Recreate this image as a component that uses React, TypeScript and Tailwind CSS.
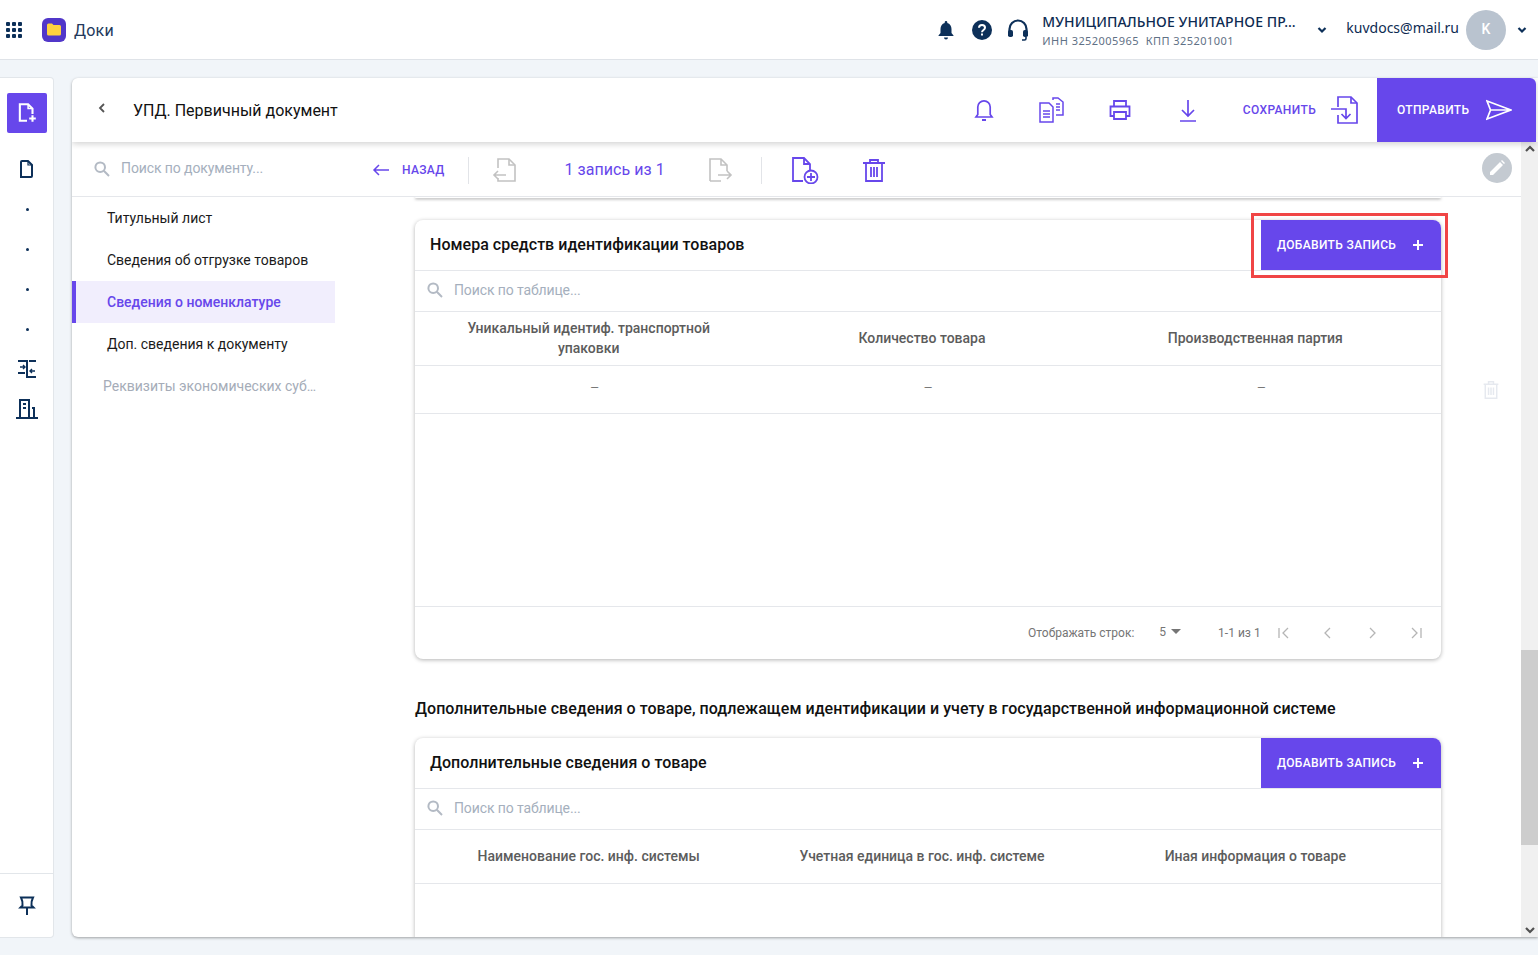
import React from "react";

const P = "#6747eb";
const N = "#0d3059";

function Svg({ s = 24, c = P, w = 1.6, children, vb = "0 0 24 24" }: { s?: number; c?: string; w?: number; children: React.ReactNode; vb?: string }) {
  return (
    <svg width={s} height={s} viewBox={vb} fill="none" stroke={c} strokeWidth={w} strokeLinecap="butt" strokeLinejoin="miter" className="shrink-0">
      {children}
    </svg>
  );
}

function SearchIcon({ s = 16 }: { s?: number }) {
  return (
    <Svg s={s} c="#b3bac4" w={2} vb="0 0 16 16">
      <circle cx="6.2" cy="6.2" r="4.8" />
      <path d="M9.8 9.8 15 15" />
    </Svg>
  );
}

function Chevron({ c = N }: { c?: string }) {
  return (
    <Svg s={10} c={c} w={2.2} vb="0 0 10 10">
      <path d="M1.5 3 5 6.5 8.5 3" />
    </Svg>
  );
}

function Dot() {
  return <div className="w-[3px] h-[3px] rounded-full bg-[#0d3059]" />;
}

function TopBar() {
  return (
    <header className="h-[60px] shrink-0 bg-white border-b border-[#dfe3e8] flex items-center pl-[6px] pr-[11px] font-['Roboto',sans-serif]">
      <div className="grid grid-cols-3 gap-[2px] w-[16px]">
        {Array.from({ length: 9 }).map((_, i) => (
          <div key={i} className="w-[4px] h-[4px] rounded-[1px] bg-[#0d3059]" />
        ))}
      </div>
      <div className="ml-[20px] w-[24px] h-[24px] rounded-[6px] bg-[#5137c9] flex items-center justify-center">
        <svg width="14" height="13" viewBox="0 0 14 13">
          <path d="M0 2a1.5 1.5 0 0 1 1.5-1.5H5L6.5 2h6A1.5 1.5 0 0 1 14 3.500V11a1.500 1.500 0 0 1-1.500 1.500h-11A1.500 1.500 0 0 1 0 11z" fill="#ffd23f" />
        </svg>
      </div>
      <span className="ml-[8px] pt-[2px] text-[16px] tracking-[0.2px] text-[#23395b]">Доки</span>
      <div className="flex-1" />
      <svg width="16" height="20" viewBox="0 0 16 20" fill={N} className="mr-[18px]">
        <path d="M8 1a1.300 1.300 0 0 1 1.300 1.300v.7C12 3.700 13.500 6 13.500 9v4l2 2.500v.5H.5v-.5l2-2.500V9c0-3 1.500-5.300 4.200-6v-.7A1.300 1.300 0 0 1 8 1z" />
        <path d="M6 17.500h4a2 2 0 0 1-4 0z" />
      </svg>
      <svg width="20" height="20" viewBox="0 0 20 20" className="mr-[15px]">
        <circle cx="10" cy="10" r="10" fill={N} />
        <path d="M7 7.800C7 6 8.300 5 10 5s3 1 3 2.700c0 2.300-3 2.300-3 4.600" stroke="#fff" strokeWidth="2" fill="none" />
        <rect x="9" y="13.500" width="2" height="2" fill="#fff" />
      </svg>
      <svg width="22" height="22" viewBox="0 0 22 22" fill="none" className="mr-[13px]">
        <path d="M2.500 13V10a8.500 8.500 0 0 1 17 0v3" stroke={N} strokeWidth="2.200" />
        <rect x="1" y="11" width="5" height="7" rx="1.800" fill={N} />
        <rect x="16" y="11" width="5" height="7" rx="1.800" fill={N} />
        <path d="M19 18v1.500a1.500 1.500 0 0 1-1.500 1.500H15" stroke={N} strokeWidth="1.600" />
      </svg>
      <div className="w-[275px] pt-[2px] flex flex-col">
        <span className="text-[14px] leading-[18px] tracking-[0.1px] text-[#0d2b52] font-['Noto_Sans',sans-serif] font-medium whitespace-nowrap">МУНИЦИПАЛЬНОЕ УНИТАРНОЕ ПР…</span>
        <span className="mt-[3px] text-[11px] leading-[14px] tracking-[0.45px] text-[#5f7186] font-['Noto_Sans',sans-serif] whitespace-nowrap">ИНН 3252005965&nbsp;&nbsp;КПП 325201001</span>
      </div>
      <Chevron />
      <span className="ml-[19px] mb-[4px] text-[14px] text-[#0d2b52] font-['Noto_Sans',sans-serif]">kuvdocs@mail.ru</span>
      <div className="ml-[7px] w-[40px] h-[40px] rounded-full bg-[#b9c3cf] flex items-center justify-center text-white text-[14px] font-medium">K</div>
      <div className="ml-[11px]"><Chevron /></div>
    </header>
  );
}

function Rail() {
  return (
    <aside className="w-[54px] h-[861px] shrink-0 bg-white border border-l-0 border-[#e2e6ea] rounded-r-[4px] flex flex-col items-center pt-[15px]">
      <div className="w-[40px] h-[40px] rounded-[2px] flex items-center justify-center bg-[#6747eb] mr-[-1px]">
        <Svg s={22} c="#fff" w={1.900} vb="0 0 20 20">
          <path d="M10 17H3.500V2H11l4 4v5" />
          <path d="M11 2v4h4" strokeWidth="1.400" />
          <path d="M15 12v6M12 15h6" />
        </Svg>
      </div>
      <div className="mt-[26px] ml-[1px]">
        <Svg s={20} c={N} w={2} vb="0 0 20 20">
          <path d="M5 3a1 1 0 0 1 1-1h6l4 4v11a1 1 0 0 1-1 1H5z" transform="translate(-1 0)" />
          <path d="M11 2v4h4" strokeWidth="1.200" />
        </Svg>
      </div>
      <div className="mt-[29px] ml-[1px] flex flex-col gap-[37px]">
        <Dot /><Dot /><Dot /><Dot />
      </div>
      <div className="mt-[28px]">
        <Svg s={20} c={N} w={2} vb="0 0 20 20">
          <path d="M1 2h9v16h9M12 2h7M1 14h7" />
          <path d="M3 8h5M6 6l2 2-2 2M18 12h-5M15 10l-2 2 2 2" strokeWidth="1.400" />
        </Svg>
      </div>
      <div className="mt-[19px]">
        <Svg s={22} c={N} w={2} vb="0 0 22 22">
          <path d="M0 20h22M4 20V2h9v18" />
          <path d="M7 6h3M7 10h3M16 10h2v10" />
        </Svg>
      </div>
      <div className="mt-auto w-full border-t border-[#e2e6ea] h-[64px] flex justify-center pt-[22px]">
        <Svg s={20} c={N} w={2} vb="0 0 20 20">
          <path d="M4 1.500h12c-1.500 3-2 4-1.500 8l2 2H3.500l2-2c.5-4 0-5-1.500-8z" />
          <path d="M10 12v7" />
        </Svg>
      </div>
    </aside>
  );
}

function CardHeader() {
  return (
    <div className="h-[64px] shrink-0 mr-[2px] flex items-stretch bg-white rounded-t-[6px] shadow-[0_2px_6px_rgba(0,0,0,0.18)] relative z-10 font-['Roboto',sans-serif]">
      <div className="w-[61px] flex items-center pl-[25px] pb-[4px]">
        <Svg s={10} c="#555" w={1.800} vb="0 0 10 10"><path d="M7 1 3 5l4 4" /></Svg>
      </div>
      <span className="self-center pt-[2px] text-[16px] text-[#111]">УПД. Первичный документ</span>
      <div className="flex-1" />
      <div className="flex items-center">
        <div className="w-[68px] flex justify-center">
          <Svg s={26} w={1.700} vb="0 0 26 26">
            <path d="M5 20h16l-1.800-2.500V10a6.200 6.200 0 0 0-12.400 0v7.500z" />
            <path d="M11 23h4" strokeWidth="2" />
          </Svg>
        </div>
        <div className="w-[68px] flex justify-center">
          <Svg s={28} w={1.500} vb="0 0 28 28">
            <path d="M2 7h9l4 4v15H2z" /><path d="M15 4V2h5l5 4v13h-7" /><path d="M5 15h7M5 18h7M5 21h7M18 8h4M18 11h4M18 14h4" />
          </Svg>
        </div>
        <div className="w-[68px] flex justify-center">
          <Svg s={24} w={1.800} vb="0 0 24 24">
            <path d="M6 8V3h12v5M6 18H2.500V8.500h19V18H18" /><path d="M6 14h12v7H6z" />
          </Svg>
        </div>
        <div className="w-[68px] flex justify-center">
          <Svg s={24} w={1.700} vb="0 0 24 24">
            <path d="M12 2v16M6 12l6 6 6-6M4 23h16" />
          </Svg>
        </div>
        <span className="ml-[21px] text-[12px] tracking-[0.35px] font-medium text-[#6747eb]">СОХРАНИТЬ</span>
        <div className="ml-[15px] mr-[18px]">
          <Svg s={28} w={1.700} vb="0 0 28 28">
            <path d="M7 11V1h13l6 6v20H7v-8" /><path d="M20 1v6h6" /><path d="M0 13h15v9M10.500 18l4.500 4.500 4.500-4.500" />
          </Svg>
        </div>
      </div>
      <div className="w-[159px] bg-[#6747eb] rounded-tr-[6px] flex items-center pl-[20px] gap-[17px]">
        <span className="text-[12px] tracking-[0.35px] font-medium text-white">ОТПРАВИТЬ</span>
        <Svg s={26} c="#fff" w={1.700} vb="0 0 26 26">
          <path d="M1 4 25 13 1 22l3.500-9zM4.500 13H25" />
        </Svg>
      </div>
    </div>
  );
}

function Toolbar() {
  return (
    <div className="h-[55px] shrink-0 border-b border-[#e5e7eb] flex items-center pt-[2px] bg-white font-['Roboto',sans-serif] relative">
      <div className="w-[300px] flex items-center pl-[22px] gap-[11px] mb-[3px]">
        <SearchIcon />
        <span className="text-[14px] tracking-[-0.1px] text-[#a5afbd]">Поиск по документу...</span>
      </div>
      <Svg s={18} w={1.500} vb="0 0 18 18"><path d="M17 9H2M7 4 2 9l5 5" /></Svg>
      <span className="ml-[12px] text-[12px] font-medium tracking-[0.3px] text-[#6747eb]">НАЗАД</span>
      <div className="ml-[24px] h-[27px] w-px bg-[#e2e4e8]" />
      <div className="ml-[23px]">
        <Svg s={26} c="#c2c2c2" w={1.600} vb="0 0 26 26">
          <path d="M6 11V2h11l6 6v16H6v-3" /><path d="M17 2v6h6" /><path d="M14 18H2M6 14l-4 4 4 4" />
        </Svg>
      </div>
      <span className="ml-[46px] w-[143px] text-[16px] tracking-[0.05px] text-[#6747eb]">1 запись из 1</span>
      <Svg s={26} c="#c2c2c2" w={1.600} vb="0 0 26 26">
        <path d="M3 24V2h11l6 6v6M14 2v6h6M3 24h11" /><path d="M11 18h13M20 14l4 4-4 4" />
      </Svg>
      <div className="ml-[28px] h-[27px] w-px bg-[#e2e4e8]" />
      <div className="ml-[29px]">
        <Svg s={28} w={1.800} vb="0 0 28 28">
          <path d="M12 25H2V2h11l6 6v7M13 2v6h6" /><circle cx="20" cy="21" r="6.500" /><path d="M20 17v8M16 21h8" />
        </Svg>
      </div>
      <div className="ml-[43px]">
        <Svg s={24} w={1.800} vb="0 0 24 24">
          <path d="M1 5h22M8 5V2h8v3M4 5v18h16V5M9 9v10M12 9v10M15 9v10" />
        </Svg>
      </div>
      <div className="absolute right-[9px] top-[11px] w-[30px] h-[30px] rounded-full bg-[#c4cad1] flex items-center justify-center">
        <svg width="18" height="18" viewBox="0 0 18 18" fill="#fff">
          <path d="M2 13 12 3l3 3L5 16H2zM13 2l1-1 3 3-1 1z" />
        </svg>
      </div>
    </div>
  );
}

function Nav() {
  return (
    <nav className="w-[263px] shrink-0 flex flex-col text-[14px] font-['Roboto',sans-serif] text-[#1a1a1a]">
      <div className="h-[42px] flex items-center pl-[35px]">Титульный лист</div>
      <div className="h-[42px] flex items-center pl-[35px]">Сведения об отгрузке товаров</div>
      <div className="h-[42px] flex items-center pl-[31px] bg-[#f1eefd] border-l-[4px] border-[#6747eb] font-medium text-[#6747eb]">Сведения о номенклатуре</div>
      <div className="h-[42px] flex items-center pl-[35px]">Доп. сведения к документу</div>
      <div className="h-[42px] flex items-center pl-[31px] text-[#a5acb8]">Реквизиты экономических суб…</div>
    </nav>
  );
}

function AddButton({ highlighted }: { highlighted?: boolean }) {
  return (
    <div className="relative w-[180px] h-[50px] bg-[#6747eb] rounded-tr-[8px] flex items-center pl-[16px] justify-between pr-[18px] text-white">
      <span className="text-[12px] tracking-[0.35px] font-medium">ДОБАВИТЬ ЗАПИСЬ</span>
      <svg width="10" height="10" viewBox="0 0 10 10" stroke="#fff" strokeWidth="2"><path d="M5 0v10M0 5h10" /></svg>
      {highlighted && <div className="absolute left-[-10px] top-[-7px] w-[197px] h-[65px] border-[3px] border-[#f04545]" />}
    </div>
  );
}

function TableCard({ title, cols, highlighted, children }: { title: string; cols: React.ReactNode[]; highlighted?: boolean; children?: React.ReactNode }) {
  return (
    <section className="bg-white rounded-t-[8px] rounded-b-[8px] shadow-[0_1px_4px_rgba(0,0,0,0.3)]">
      <div className="h-[51px] border-b border-[#e5e7eb] flex items-center justify-between pl-[15px] font-['Roboto',sans-serif]">
        <span className="text-[16px] tracking-[0.03px] font-medium text-[#111]">{title}</span>
        <div className="self-start"><AddButton highlighted={highlighted} /></div>
      </div>
      <div className="h-[41px] border-b border-[#e5e7eb] flex items-center pl-[12px] pb-[2px] gap-[11px]">
        <SearchIcon />
        <span className="text-[14px] tracking-[-0.12px] text-[#a5afbd]">Поиск по таблице...</span>
      </div>
      <div className="h-[54px] border-b border-[#e5e7eb] grid grid-cols-3 pl-[7px] pr-[19px] pb-[2px] items-center text-center text-[14px] leading-[20px] font-medium text-[#5c5c5c]">
        {cols.map((c, i) => (
          <div key={i} className="flex justify-center"><span className="max-w-[260px]">{c}</span></div>
        ))}
      </div>
      {children}
    </section>
  );
}

function Footer() {
  return (
    <div className="h-[53px] border-t border-[#e5e7eb] flex items-center text-[12px] text-[#757575] pl-[613px]">
      <span className="whitespace-nowrap">Отображать строк:</span>
      <span className="ml-[25px] mb-[2px]">5</span>
      <svg width="10" height="5" viewBox="0 0 10 5" fill="#757575" className="ml-[5px] mb-[4px]"><path d="M0 0h10L5 5z" /></svg>
      <span className="ml-[37px] whitespace-nowrap">1-1 из 1</span>
      <div className="ml-[16px] flex gap-[30px]">
        <Svg s={14} c="#b5b5b5" w={1.300} vb="0 0 14 14"><path d="M2 2v10M11 2 6 7l5 5" /></Svg>
        <Svg s={14} c="#b5b5b5" w={1.300} vb="0 0 14 14"><path d="M9 2 4 7l5 5" /></Svg>
        <Svg s={14} c="#b5b5b5" w={1.300} vb="0 0 14 14"><path d="m5 2 5 5-5 5" /></Svg>
        <Svg s={14} c="#b5b5b5" w={1.300} vb="0 0 14 14"><path d="m3 2 5 5-5 5M12 2v10" /></Svg>
      </div>
    </div>
  );
}

function Content() {
  return (
    <div className="w-[1026px] ml-[80px] shrink-0 font-['Roboto',sans-serif]">
      <div className="h-[1px] shadow-[0_1px_3px_rgba(0,0,0,0.6)] rounded-b-[8px]" />
      <div className="mt-[22px]">
        <TableCard
          highlighted
          title="Номера средств идентификации товаров"
          cols={["Уникальный идентиф. транспортной упаковки", "Количество товара", "Производственная партия"]}
        >
          <div className="h-[48px] border-b border-[#e5e7eb] grid grid-cols-3 pl-[13px] pr-[13px] pb-[2px] items-center text-center text-[11px] text-[#6b6b6b]">
            <span>—</span><span>—</span><span>—</span>
          </div>
          <div className="h-[192px]" />
          <Footer />
        </TableCard>
      </div>
      <h3 className="mt-[40px] text-[16px] leading-[20px] tracking-[0.04px] font-medium text-[#111] whitespace-nowrap">
        Дополнительные сведения о товаре, подлежащем идентификации и учету в государственной информационной системе
      </h3>
      <div className="mt-[19px]">
        <TableCard
          title="Дополнительные сведения о товаре"
          cols={["Наименование гос. инф. системы", "Учетная единица в гос. инф. системе", "Иная информация о товаре"]}
        >
          <div className="h-[60px]" />
        </TableCard>
      </div>
    </div>
  );
}

function Scrollbar() {
  return (
    <div className="w-[17px] shrink-0 bg-[#f0f0f0] flex flex-col items-center">
      <div className="h-[14px] flex items-center justify-center">
        <Svg s={10} c="#505050" w={2.200} vb="0 0 10 10"><path d="M1 7 5 3l4 4" /></Svg>
      </div>
      <div className="mt-[494px] w-full h-[195px] bg-[#cdcdcd]" />
      <div className="mt-auto h-[14px] flex items-center justify-center">
        <Svg s={10} c="#505050" w={2.200} vb="0 0 10 10"><path d="m1 3 4 4 4-4" /></Svg>
      </div>
    </div>
  );
}

export default function App() {
  return (
    <div className="w-[1538px] h-[955px] overflow-hidden bg-[#f1f5f9] flex flex-col">
      <TopBar />
      <div className="flex pt-[17px] items-start">
        <Rail />
        <main className="ml-[18px] mt-[1px] w-[1466px] h-[859px] flex flex-col overflow-hidden rounded-tl-[6px] rounded-bl-[6px] bg-white shadow-[0_1px_3px_rgba(0,0,0,0.35)]">
          <CardHeader />
          <div className="flex flex-1 min-h-0">
            <div className="flex-1 min-w-0 flex flex-col">
              <Toolbar />
              <div className="flex flex-1 min-h-0 overflow-hidden relative">
                <Nav />
                <Content />
                <div className="ml-[41px] mt-[184px] h-fit">
                  <Svg s={18} c="#e6e9ef" w={1.800} vb="0 0 18 22">
                    <path d="M0 4h18M6 4V1h6v3M2 4v17h14V4M6 8v9M9 8v9M12 8v9" />
                  </Svg>
                </div>
              </div>
            </div>
            <Scrollbar />
          </div>
        </main>
      </div>
    </div>
  );
}
